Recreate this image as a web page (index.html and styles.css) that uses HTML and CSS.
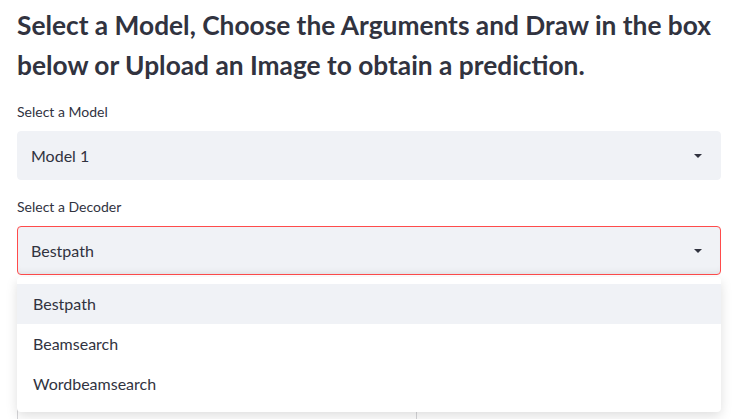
FILE: index.html
```html
<!DOCTYPE html>
<html>
<head>
<meta charset="utf-8">
<link rel="stylesheet" href="styles.css">
</head>
<body>
<div class="main">
  <h3 class="title">Select a Model, Choose the Arguments and Draw in the box below or Upload an Image to obtain a prediction.</h3>
  <div class="field">
    <div class="label">Select a Model</div>
    <div class="select">
      <span class="value">Model 1</span>
      <svg class="caret" width="10" height="6" viewBox="0 0 10 6"><path d="M1 1h8L5 5z" fill="#31333f"/></svg>
    </div>
  </div>
  <div class="field">
    <div class="label">Select a Decoder</div>
    <div class="select open">
      <span class="value">Bestpath</span>
      <svg class="caret" width="10" height="6" viewBox="0 0 10 6"><path d="M1 1h8L5 5z" fill="#31333f"/></svg>
      <ul class="menu">
        <li class="opt active">Bestpath</li>
        <li class="opt">Beamsearch</li>
        <li class="opt">Wordbeamsearch</li>
      </ul>
    </div>
  </div>
  <div class="below">
    <div class="col"></div>
    <div class="col"></div>
  </div>
</div>
</body>
</html>
```
FILE: styles.css
```css
html, body {
  margin: 0;
  padding: 0;
  background: #ffffff;
}
body {
  font-family: "Lato", "Liberation Sans", sans-serif;
  color: #31333f;
  width: 734px;
  height: 419px;
  overflow: hidden;
}
.main {
  padding: 0 13px 0 17px;
}
.title {
  margin: 0;
  padding: 5px 0 0 0;
  font-size: 26.3px;
  font-weight: 700;
  line-height: 40px;
  color: #31333f;
}
.field {
  display: flex;
  flex-direction: column;
}
.field + .field {
  margin-top: 18px;
}
.title + .field {
  margin-top: 18px;
}
.label {
  font-size: 14px;
  line-height: 18px;
  margin-bottom: 10px;
}
.select {
  position: relative;
  height: 49px;
  box-sizing: border-box;
  background: #f0f2f6;
  border: 1px solid #f0f2f6;
  border-radius: 4px;
  display: flex;
  align-items: center;
  padding: 0 17px 0 13px;
}
.select.open {
  border-color: #ff4b4b;
  box-shadow: inset 0 -6px 6px -4px rgba(0,0,0,0.06);
}
.value {
  flex: 1;
  font-size: 16px;
}
.caret {
  display: block;
}
.menu {
  position: absolute;
  left: -1px;
  right: -1px;
  top: 50px;
  margin: 0;
  padding: 7px 0 8px;
  list-style: none;
  background: #ffffff;
  border-radius: 4px;
  box-shadow: 0 4px 12px rgba(0,0,0,0.13);
  z-index: 2;
}
.opt {
  height: 40px;
  line-height: 40px;
  padding: 0 16px;
  font-size: 16px;
}
.opt.active {
  background: #f0f2f6;
}
.below {
  display: flex;
  margin-top: 20px;
  height: 200px;
}
.col {
  flex: 1;
  border-left: 1px solid #d6d6d9;
}
.col + .col {
  flex: 0 0 304px;
}
```
